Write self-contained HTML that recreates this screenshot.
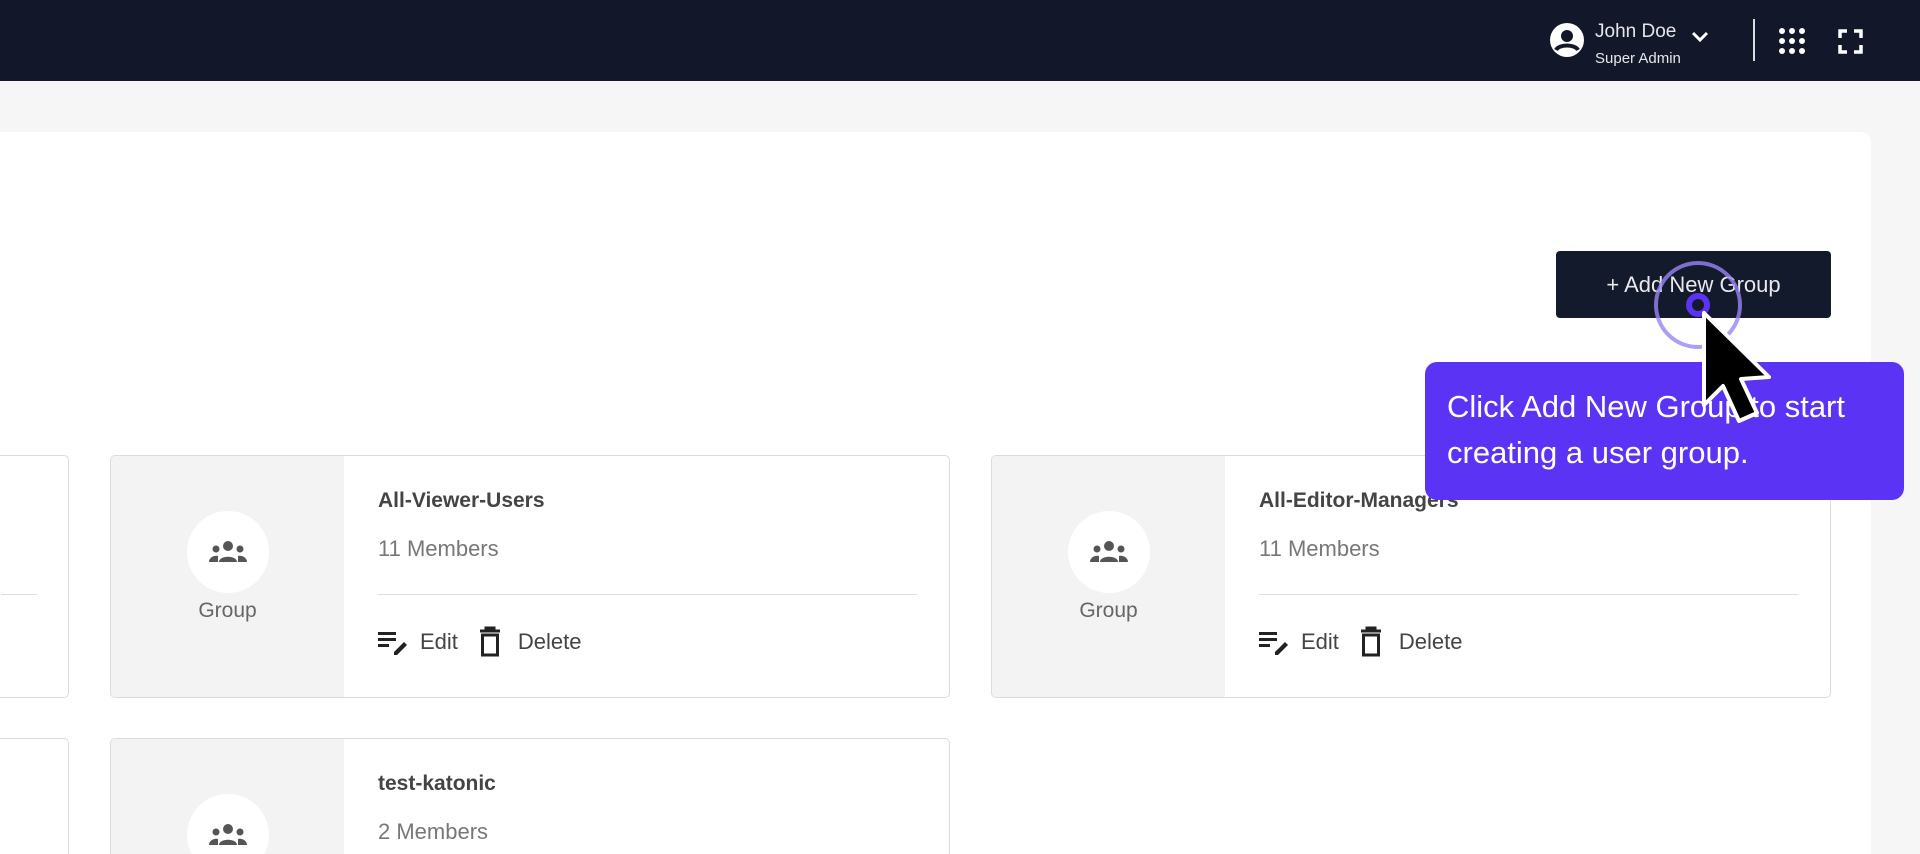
<!DOCTYPE html>
<html><head><meta charset="utf-8"><style>
*{box-sizing:border-box;margin:0;padding:0}
html,body{width:1920px;height:854px;overflow:hidden}
body{background:#f6f6f6;font-family:"Liberation Sans",sans-serif;position:relative}
.hdr{position:absolute;left:0;top:0;width:1920px;height:81px;background:#12182a}
.panel{position:absolute;left:0;top:132px;width:1871px;height:722px;background:#fff;border-radius:0 10px 0 0}
.btn{position:absolute;left:1556px;top:251px;width:275px;height:67px;background:#131a2b;border-radius:4px;color:#e8e8ee;font-size:22px;display:flex;align-items:center;justify-content:center}
.card{position:absolute;width:840px;height:243px;border:1px solid #dcdcdc;border-radius:5px;background:#fff;overflow:hidden}
.card.b{height:116px;border-bottom:none;border-radius:5px 5px 0 0}
.card .l{position:absolute;left:0;top:0;width:233px;height:100%;background:#f3f3f3}
.circ{position:absolute;left:76px;top:55px;width:82px;height:82px;border-radius:50%;background:#fff;display:flex;align-items:center;justify-content:center}
.gl{position:absolute;left:0;width:233px;top:143px;text-align:center;color:#666;font-size:21px}
.t{position:absolute;left:267px;top:33px;font-weight:bold;font-size:21px;color:#444}
.m{position:absolute;left:267px;top:80px;font-size:22px;color:#777}
.d{position:absolute;left:267px;top:138px;width:539px;height:1px;background:#ddd}
.a{position:absolute;left:267px;top:170px;font-size:22px;color:#444;display:flex;align-items:center}
.tip{position:absolute;left:1425px;top:362px;width:479px;height:138px;background:#5b33f5;border-radius:12px;color:#fff;font-size:31px;line-height:46px;padding:22px 0 0 22px}
</style></head><body>
<div class="hdr">
<svg style="position:absolute;left:1550px;top:23px" width="34" height="34" viewBox="0 0 34 34"><circle cx="17" cy="17" r="17" fill="#fff"/><circle cx="17" cy="13" r="6" fill="#12182a"/><path d="M6 27c3-6 19-6 22 0" stroke="#12182a" stroke-width="4" fill="none"/></svg>
<div style="position:absolute;left:1595px;top:21px;color:#e6e6ea;font-size:19px">John Doe</div>
<svg style="position:absolute;left:1690px;top:30px" width="20" height="14" viewBox="0 0 20 14"><path d="M3 3l7 7 7-7" stroke="#fff" stroke-width="3" fill="none"/></svg>
<div style="position:absolute;left:1595px;top:50px;color:#e6e6ea;font-size:15px">Super Admin</div>
<div style="position:absolute;left:1753px;top:19px;width:2px;height:42px;background:#ddd"></div>
<svg style="position:absolute;left:1778px;top:27px" width="28" height="28" viewBox="0 0 28 28" fill="#fff"><circle cx="4" cy="4" r="3"/><circle cx="14" cy="4" r="3"/><circle cx="24" cy="4" r="3"/><circle cx="4" cy="14" r="3"/><circle cx="14" cy="14" r="3"/><circle cx="24" cy="14" r="3"/><circle cx="4" cy="24" r="3"/><circle cx="14" cy="24" r="3"/><circle cx="24" cy="24" r="3"/></svg>
<svg style="position:absolute;left:1838px;top:29px" width="25" height="25" viewBox="0 0 25 25" stroke="#fff" stroke-width="3.5" fill="none"><path d="M2 9V2h7M16 2h7v7M23 16v7h-7M9 23H2v-7"/></svg>
</div>
<div class="panel"></div>
<div class="btn">+ Add New Group</div>

<div class="card" style="left:-771px;top:455px"><div class="d" style="left:771px;width:36px;background:#ddd"></div></div>
<div class="card b" style="left:-771px;top:738px"></div>

<div class="card" style="left:110px;top:455px"><div class="l"></div><div class="circ"><svg width="40" height="24" viewBox="0 0 40 24" fill="#555"><circle cx="20" cy="6" r="5"/><circle cx="8" cy="9" r="3.5"/><circle cx="32" cy="9" r="3.5"/><path d="M11 22c0-7 18-7 18 0zM1 22c0-5 6-7 9-6v6zM39 22c0-5-6-7-9-6v6z"/></svg></div><div class="gl">Group</div>
<div class="t">All-Viewer-Users</div><div class="m">11 Members</div><div class="d"></div>
<div class="a"><svg width="32" height="28" viewBox="0 0 32 28" fill="#222"><rect x="0" y="4" width="18" height="3"/><rect x="0" y="10" width="18" height="3"/><rect x="0" y="16" width="11" height="3"/><path d="M16 24l10-10 3 3-10 10h-3z"/></svg><span style="margin:0 20px 0 10px">Edit</span><svg width="24" height="32" viewBox="0 0 24 32"><path d="M2 5h20M8 5V2h8v3" stroke="#222" stroke-width="3" fill="none"/><rect x="4.5" y="9" width="15" height="20" stroke="#222" stroke-width="3" fill="none"/></svg><span style="margin-left:16px">Delete</span></div></div>

<div class="card" style="left:991px;top:455px"><div class="l"></div><div class="circ"><svg width="40" height="24" viewBox="0 0 40 24" fill="#555"><circle cx="20" cy="6" r="5"/><circle cx="8" cy="9" r="3.5"/><circle cx="32" cy="9" r="3.5"/><path d="M11 22c0-7 18-7 18 0zM1 22c0-5 6-7 9-6v6zM39 22c0-5-6-7-9-6v6z"/></svg></div><div class="gl">Group</div>
<div class="t">All-Editor-Managers</div><div class="m">11 Members</div><div class="d"></div>
<div class="a"><svg width="32" height="28" viewBox="0 0 32 28" fill="#222"><rect x="0" y="4" width="18" height="3"/><rect x="0" y="10" width="18" height="3"/><rect x="0" y="16" width="11" height="3"/><path d="M16 24l10-10 3 3-10 10h-3z"/></svg><span style="margin:0 20px 0 10px">Edit</span><svg width="24" height="32" viewBox="0 0 24 32"><path d="M2 5h20M8 5V2h8v3" stroke="#222" stroke-width="3" fill="none"/><rect x="4.5" y="9" width="15" height="20" stroke="#222" stroke-width="3" fill="none"/></svg><span style="margin-left:16px">Delete</span></div></div>

<div class="card b" style="left:110px;top:738px"><div class="l"></div><div class="circ"><svg width="40" height="24" viewBox="0 0 40 24" fill="#555"><circle cx="20" cy="6" r="5"/><circle cx="8" cy="9" r="3.5"/><circle cx="32" cy="9" r="3.5"/><path d="M11 22c0-7 18-7 18 0zM1 22c0-5 6-7 9-6v6zM39 22c0-5-6-7-9-6v6z"/></svg></div>
<div class="t">test-katonic</div><div class="m">2 Members</div></div>

<div class="tip">Click Add New Group to start<br>creating a user group.</div>
<svg style="position:absolute;left:1640px;top:250px" width="140" height="190" viewBox="1640 250 140 190">
<circle cx="1698" cy="305" r="42" stroke="#9b85f5" stroke-width="4" fill="none" opacity=".8"/>
<circle cx="1698" cy="305" r="9" stroke="#5b33f5" stroke-width="6" fill="none"/>
<path d="M1704 313l0 92 19-19 16 35 18-8-16-34 28-2z" fill="#000" stroke="#fff" stroke-width="4" stroke-linejoin="round"/>
</svg>
</body></html>
